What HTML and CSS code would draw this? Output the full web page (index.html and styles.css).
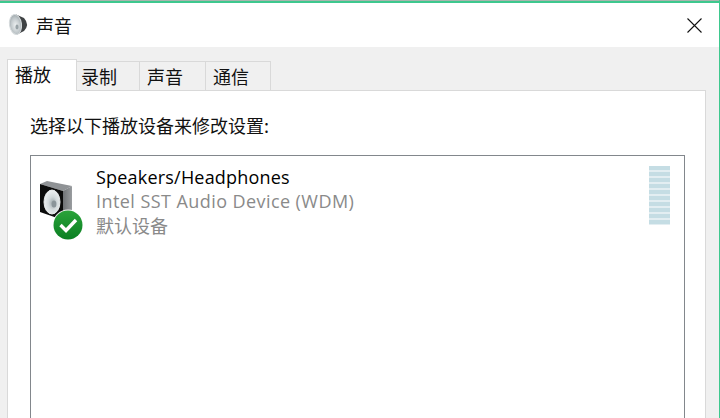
FILE: index.html
```html
<!DOCTYPE html>
<html lang="zh">
<head>
<meta charset="utf-8">
<title>声音</title>
<link rel="stylesheet" href="styles.css">
</head>
<body>
<div class="window">
  <div class="frame-edge"></div>
  <header class="titlebar">
    <svg class="title-icon" width="26" height="26" viewBox="0 0 26 26">
      <defs>
        <radialGradient id="cone" cx="0.5" cy="0.55" r="0.6">
          <stop offset="0" stop-color="#eef1f2"/>
          <stop offset="0.6" stop-color="#c2c9cc"/>
          <stop offset="1" stop-color="#98a1a5"/>
        </radialGradient>
      </defs>
      <path d="M8 2.5 L16 6 Q22 12.5 16 19 L8 23 Z" fill="#3f4244"/>
      <ellipse cx="7.5" cy="12.5" rx="6" ry="10" transform="rotate(-8 7.5 12.5)" fill="url(#cone)" stroke="#d5dadc"/>
      <ellipse cx="9" cy="15" rx="1.6" ry="2.4" fill="#98a2a6"/>
    </svg>
    <span class="title-text">声音</span>
    <svg class="close" width="15" height="15" viewBox="0 0 15 15">
      <path d="M0.5 0.5 L14.5 14.5 M14.5 0.5 L0.5 14.5" stroke="#111" stroke-width="1.1" fill="none"/>
    </svg>
  </header>
  <div class="content">
    <nav class="tabs">
      <div class="tab active">播放</div>
      <div class="tab w-63">录制</div>
      <div class="tab w-66">声音</div>
      <div class="tab w-65">通信</div>
    </nav>
    <section class="panel">
      <p class="intro">选择以下播放设备来修改设置:</p>
      <div class="listbox">
        <div class="device">
          <svg class="device-icon" width="46" height="64" viewBox="0 0 46 64">
            <defs>
              <radialGradient id="dcone" cx="0.55" cy="0.55" r="0.6">
                <stop offset="0" stop-color="#9aa4a8"/>
                <stop offset="0.45" stop-color="#d2d9db"/>
                <stop offset="1" stop-color="#f2f4f5"/>
              </radialGradient>
              <linearGradient id="side" x1="0" y1="0" x2="1" y2="0">
                <stop offset="0" stop-color="#6f7275"/>
                <stop offset="1" stop-color="#9a9da0"/>
              </linearGradient>
              <linearGradient id="badge" x1="0" y1="0" x2="0" y2="1">
                <stop offset="0" stop-color="#2aa33a"/>
                <stop offset="1" stop-color="#0a7f22"/>
              </linearGradient>
            </defs>
            <path d="M1 7 L8 4 L33 9 L24 14 Z" fill="#8f9295"/>
            <path d="M24 14 L33 9 L33 38 L24 43 Z" fill="url(#side)"/>
            <path d="M1 7 L24 14 L24 43 L1 35 Z" fill="#0b0b0b"/>
            <ellipse cx="13" cy="25" rx="8" ry="12" fill="url(#dcone)" stroke="#e6e9ea"/>
            <ellipse cx="15" cy="27" rx="2.4" ry="3.6" fill="#8a9499"/>
            <circle cx="29" cy="48" r="15.5" fill="#fff" opacity="0.9"/>
            <circle cx="29" cy="48" r="14.5" fill="url(#badge)"/>
            <path d="M21.5 48 L27 53.5 L37 43" fill="none" stroke="#fff" stroke-width="3.4"/>
          </svg>
          <div class="device-text">
            <div class="device-name">Speakers/Headphones</div>
            <div class="device-sub spaced">Intel SST Audio Device (WDM)</div>
            <div class="device-sub cjk">默认设备</div>
          </div>
          <div class="meter">
            <i></i><i></i><i></i><i></i><i></i><i></i><i></i><i></i><i></i><i></i>
          </div>
        </div>
      </div>
    </section>
  </div>
</div>
</body>
</html>
```
FILE: styles.css
```css
* { box-sizing: border-box; }
html, body { margin: 0; padding: 0; height: 100%; overflow: hidden; }
body {
  font-family: "Noto Sans CJK SC", "Liberation Sans", sans-serif;
  background: #f0f0f0;
  color: #111;
}
.window {
  height: 418px;
  border-right: 1px solid #3ec88e;
  display: flex;
  flex-direction: column;
  overflow: hidden;
}
.frame-edge {
  height: 3px;
  flex: none;
  background: #3ec88e;
  border-top: 1px solid #a9b5ae;
}
.titlebar {
  height: 44px;
  flex: none;
  background: #fff;
  display: flex;
  align-items: center;
  padding: 0 17px 0 8px;
}
.title-icon { flex: none; }
.title-text { font-size: 18px; line-height: 24px; margin-left: 2px; }
.close { margin-left: auto; }
.content {
  flex: 1;
  padding: 12px 13px 0 7px;
  display: flex;
  flex-direction: column;
  min-height: 0;
}
.tabs {
  display: flex;
  align-items: flex-end;
  height: 31px;
  flex: none;
  position: relative;
  z-index: 1;
}
.tab {
  height: 29px;
  border: 1px solid #d9d9d9;
  border-bottom: 0;
  border-left-width: 0;
  font-size: 18px;
  line-height: 28px;
  padding-left: 4px;
  background: #f0f0f0;
}
.tab.active {
  width: 70px;
  height: 32px;
  margin-bottom: -1px;
  background: #fff;
  border-left-width: 1px;
  line-height: 29px;
  padding-left: 7px;
}
.w-63 { width: 63px; }
.w-66 { width: 66px; padding-left: 7px; }
.w-65 { width: 65px; padding-left: 7px; }
.panel {
  flex: 1;
  background: #fff;
  border: 1px solid #d9d9d9;
  border-bottom: 0;
  padding: 0 20px 0 22px;
  min-height: 0;
}
.intro {
  margin: 21px 0 0;
  font-size: 18px;
  line-height: 26px;
}
.listbox {
  margin-top: 17px;
  height: 300px;
  border: 1px solid #82878c;
  background: #fff;
}
.device { display: flex; align-items: flex-start; }
.device-icon { flex: none; margin: 21px 0 0 8px; }
.device-text { margin: 9px 0 0 11px; flex: 1; }
.device-name {
  font-family: "Open Sans", "Liberation Sans", sans-serif;
  font-size: 18px;
  line-height: 24px;
  letter-spacing: 0.2px;
  color: #000;
}
.device-sub {
  font-family: "Open Sans", "Liberation Sans", sans-serif;
  font-size: 18px;
  line-height: 24px;
  color: #8a8a8a;
}
.device-sub.spaced { letter-spacing: 0.43px; }
.device-sub.cjk { font-family: "Noto Sans CJK SC", sans-serif; }
.meter {
  flex: none;
  width: 21px;
  margin: 10px 14px 0 0;
  background: #e3eef2;
  display: flex;
  flex-direction: column;
  gap: 2px;
  padding-bottom: 1px;
}
.meter i {
  display: block;
  height: 4px;
  background: #c5dde4;
}
```
